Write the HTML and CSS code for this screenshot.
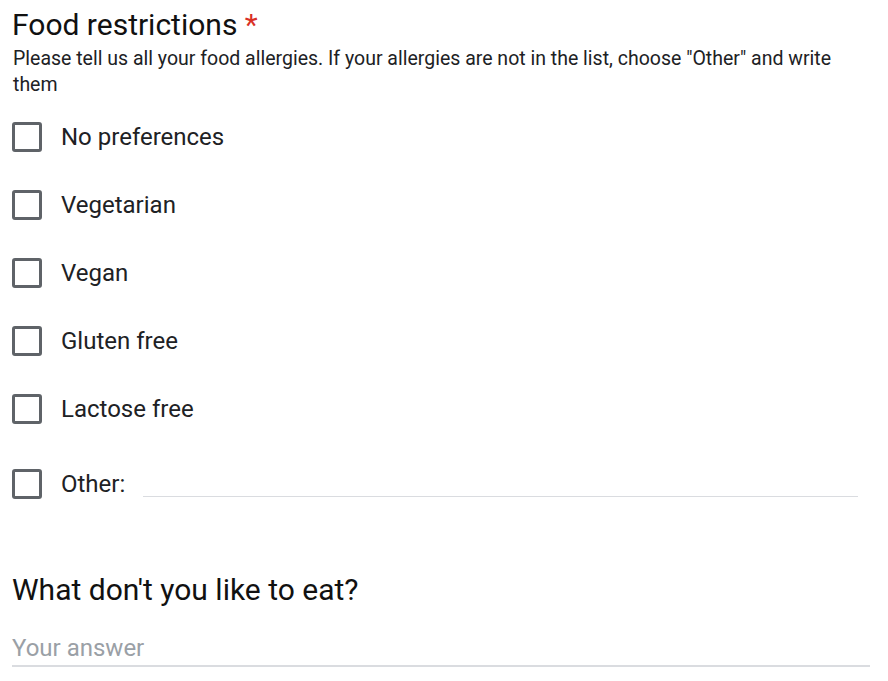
FILE: index.html
```html
<!DOCTYPE html>
<html>
<head>
<meta charset="utf-8">
<link rel="stylesheet" href="styles.css">
</head>
<body>
<div class="form">
  <section class="question">
    <h2 class="q-title">Food restrictions <span class="req">*</span></h2>
    <p class="q-desc">Please tell us all your food allergies. If your allergies are not in the list, choose "Other" and write them</p>
    <ul class="options">
      <li class="option"><span class="box"></span><span class="label">No preferences</span></li>
      <li class="option"><span class="box"></span><span class="label">Vegetarian</span></li>
      <li class="option"><span class="box"></span><span class="label">Vegan</span></li>
      <li class="option"><span class="box"></span><span class="label">Gluten free</span></li>
      <li class="option"><span class="box"></span><span class="label">Lactose free</span></li>
      <li class="option other"><span class="box"></span><span class="label">Other:</span><span class="other-line"></span></li>
    </ul>
  </section>
  <section class="question second">
    <h2 class="q-title">What don't you like to eat?</h2>
    <div class="answer">Your answer</div>
  </section>
</div>
</body>
</html>
```
FILE: styles.css
```css
html, body {
  margin: 0;
  padding: 0;
  background: #ffffff;
}
body {
  font-family: Roboto, "Liberation Sans", Arial, sans-serif;
  color: #202124;
}
.form {
  padding: 7px 18px 0 12px;
}
.q-title {
  margin: 0;
  font-size: 30px;
  font-weight: 400;
  line-height: 36px;
  color: #111111;
}
.req {
  color: #d93025;
}
.q-desc {
  margin: 2.5px 0 0 1px;
  font-size: 19.5px;
  line-height: 26px;
  color: #202124;
}
.options {
  list-style: none;
  margin: 24.5px 0 0 0;
  padding: 0;
  display: flex;
  flex-direction: column;
  gap: 38px;
}
.option {
  display: flex;
  align-items: center;
  height: 30px;
}
.option.other {
  margin-top: 7px;
}
.box {
  box-sizing: border-box;
  width: 30px;
  height: 30px;
  border: 3px solid #5f6368;
  border-radius: 3px;
  flex: none;
}
.label {
  margin-left: 19px;
  font-size: 24px;
  line-height: 30px;
  color: #202124;
}
.other-line {
  flex: 1;
  align-self: flex-end;
  margin: 0 12px 2px 18px;
  border-bottom: 1px solid #dadce0;
}
.second {
  margin-top: 73px;
}
.answer {
  margin-top: 24.5px;
  font-size: 24px;
  line-height: 30px;
  color: #9aa0a6;
  border-bottom: 2px solid #dadce0;
  padding-bottom: 2px;
}
```
